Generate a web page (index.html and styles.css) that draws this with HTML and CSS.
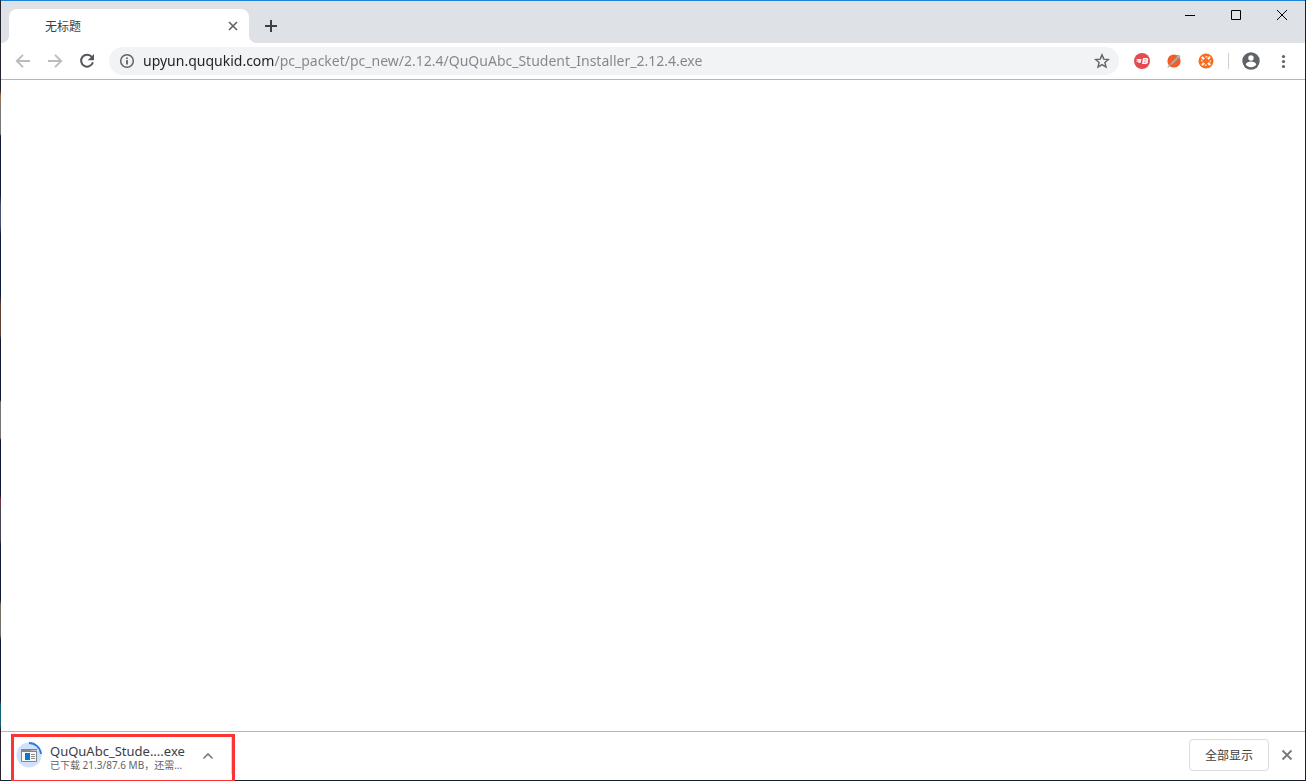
FILE: index.html
```html
<!DOCTYPE html>
<html lang="zh-CN">
<head>
<meta charset="utf-8">
<title>无标题</title>
<link rel="stylesheet" href="styles.css">
</head>
<body>
<div class="window">
  <header class="tabstrip">
    <div class="tab">
      <span class="tab-title">无标题</span>
      <button class="icon-button tab-close" aria-label="关闭标签页">
        <svg width="16" height="16" viewBox="0 0 16 16"><path d="M4 4l8 8M12 4l-8 8" fill="none" stroke="#5f6368" stroke-width="1.600"/></svg>
      </button>
    </div>
    <button class="icon-button new-tab" aria-label="新标签页">
      <svg width="16" height="16" viewBox="0 0 16 16"><path d="M8 2v12M2 8h12" fill="none" stroke="#3c4043" stroke-width="2"/></svg>
    </button>
    <div class="caption">
      <button class="icon-button caption-button" aria-label="最小化">
        <svg width="12" height="12" viewBox="0 0 12 12"><path d="M1 6.500h10" stroke="#000"/></svg>
      </button>
      <button class="icon-button caption-button" aria-label="最大化">
        <svg width="12" height="12" viewBox="0 0 12 12"><path d="M1.500 1.500h9v9h-9z" fill="none" stroke="#000"/></svg>
      </button>
      <button class="icon-button caption-button" aria-label="关闭">
        <svg width="12" height="12" viewBox="0 0 12 12"><path d="M1 1l10 10M11 1L1 11" stroke="#000"/></svg>
      </button>
    </div>
  </header>

  <nav class="toolbar">
    <button class="icon-button nav-button" aria-label="后退">
      <svg width="16" height="16" viewBox="0 0 16 16"><path d="M15 8H2M8 1.800L1.800 8 8 14.200" fill="none" stroke="#babcbe" stroke-width="1.900"/></svg>
    </button>
    <button class="icon-button nav-button" aria-label="前进">
      <svg width="16" height="16" viewBox="0 0 16 16"><path d="M1 8h13M8 1.800L14.200 8 8 14.200" fill="none" stroke="#babcbe" stroke-width="1.900"/></svg>
    </button>
    <button class="icon-button nav-button" aria-label="重新加载">
      <svg width="16" height="16" viewBox="0 0 16 16"><path d="M12.900 4A6 6 0 1 0 13.900 9.300" fill="none" stroke="#54575c" stroke-width="2"/><path d="M15 1v6.300H8.700z" fill="#54575c"/></svg>
    </button>
    <div class="omnibox">
      <button class="icon-button" aria-label="网站信息">
        <svg width="16" height="16" viewBox="0 0 16 16"><circle cx="8" cy="8" r="6.300" fill="none" stroke="#5f6368" stroke-width="1.500"/><path d="M8 7v4.500M8 4.400v1.700" stroke="#5f6368" stroke-width="1.800"/></svg>
      </button>
      <input class="url" type="text" aria-label="地址" spellcheck="false" value="upyun.ququkid.com/pc_packet/pc_new/2.12.4/QuQuAbc_Student_Installer_2.12.4.exe">
      <button class="icon-button" aria-label="添加书签">
        <svg width="16" height="16" viewBox="0 0 16 16"><path d="M8 1.900l1.800 4.200 4.600.4-3.500 3 1.100 4.500L8 11.600 4 14l1.100-4.500-3.500-3 4.600-.4z" fill="none" stroke="#5f6368" stroke-width="1.400"/></svg>
      </button>
    </div>
    <div class="extensions">
      <button class="icon-button" aria-label="扩展程序 B">
        <svg width="16" height="16" viewBox="0 0 16 16"><circle cx="8" cy="8" r="8" fill="#e54b50"/><path d="M3 6h4.600L7 8.200 6.400 10H4l.8-1.200H1.800L3 7.700h1.500L2.200 7z" fill="#fff" fill-opacity=".9"/><path d="M9.700 5.800h2.700c1.600 0 1.400 2-.1 2.100 1.400.2 1.100 2.300-.5 2.300H8.900zM9.300 8h3" fill="none" stroke="#fff" stroke-width="1.500"/></svg>
      </button>
      <button class="icon-button" aria-label="Postman">
        <svg width="16" height="16" viewBox="0 0 16 16"><circle cx="8" cy="8" r="6.600" fill="#f55d24"/><path d="M1.800 14.300L6.300 8.300l5.200-4.900 1.400 1.400-5 5.200z" fill="#c3aaa0" stroke="#8b8b90" stroke-width=".6"/><circle cx="12.300" cy="3.800" r="1.600" fill="#d5b2a2" stroke="#7f8388" stroke-width=".5"/></svg>
      </button>
      <button class="icon-button" aria-label="扩展程序">
        <svg width="16" height="16" viewBox="0 0 16 16"><circle cx="8" cy="8" r="7.500" fill="#f86c20"/><path d="M7.300 3.900h2.200M12.100 7.300v2.200M8.700 12.100H6.500M3.900 8.700V6.500" stroke="#fff" stroke-width="1"/><path d="M3.700 3.900l2.400 2.200M12.100 3.700L9.900 6.100M12.300 12.100L9.900 9.900M3.900 12.300l2.200-2.400" stroke="#fff" stroke-width="2"/></svg>
      </button>
    </div>
    <span class="divider"></span>
    <button class="icon-button profile" aria-label="用户">
      <svg width="18" height="18" viewBox="0 0 18 18"><circle cx="9" cy="9" r="8.700" fill="#5f6368"/><circle cx="9" cy="6" r="2.700" fill="#fff"/><path d="M3.700 12.500c.8-4 9.800-4 10.600 0-2.300 3.700-8.300 3.700-10.600 0z" fill="#fff"/></svg>
    </button>
    <button class="icon-button" aria-label="菜单">
      <svg width="16" height="16" viewBox="0 0 16 16"><g fill="#5f6368"><circle cx="8.500" cy="3.500" r="1.600"/><circle cx="8.500" cy="8.500" r="1.600"/><circle cx="8.500" cy="13.500" r="1.600"/></g></svg>
    </button>
  </nav>

  <main class="page"></main>

  <footer class="shelf">
    <div class="download">
      <svg class="download-icon" width="28" height="28" viewBox="0 0 28 28">
        <circle cx="14" cy="14" r="12.500" fill="#d0e1fb"/>
        <path d="M14 2a12 12 0 0 1 12 11" fill="none" stroke="#2b7be5" stroke-width="1.800"/>
        <path d="M6.500 8.500h15v12h-15z" fill="#f8f8f8" stroke="#858585"/>
        <path d="M6 8h16v3H6z" fill="#858585"/>
        <path d="M16.500 9.500h1M18.500 9.500h1M20.500 9.500h1" stroke="#eee"/>
        <path d="M10 12h5v7h-5z" fill="#0878d7"/>
        <path d="M16 13.500h4M16 15.500h4M16 17.500h4" stroke="#8c8c8c"/>
      </svg>
      <div class="download-text">
        <span class="download-name">QuQuAbc_Stude....exe</span>
        <span class="download-status">已下载 21.3/87.6 MB，还需...</span>
      </div>
      <button class="icon-button download-menu" aria-label="下载选项">
        <svg width="16" height="16" viewBox="0 0 16 16"><path d="M3.500 11.500L8 7l4.500 4.500" fill="none" stroke="#777a7e" stroke-width="1.600"/></svg>
      </button>
      <span class="highlight"></span>
    </div>
    <div class="shelf-actions">
      <button class="show-all">全部显示</button>
      <button class="icon-button" aria-label="关闭下载栏">
        <svg width="16" height="16" viewBox="0 0 16 16"><path d="M3.500 3.500l9 9M12.500 3.500l-9 9" stroke="#75787c" stroke-width="1.800"/></svg>
      </button>
    </div>
  </footer>
</div>
</body>
</html>
```
FILE: styles.css
```css
* { box-sizing: border-box; }

body {
  margin: 0;
  padding: 0 1px 1px;
  min-height: 100vh;
  display: flex;
  background:
    linear-gradient(#24242e 0 90px, #a96d3e 96px, #777 106px 134px, #101b38 136px 195px, #49516b 205px 225px, #0d1b3c 235px 295px, #5a4032 305px 335px, #101a35 340px 400px, #77736f 402px 438px, #0d1735 440px 495px, #8c2940 500px, #444351 510px 540px, #111a36 545px 600px, #766f68 605px 635px, #101a35 640px 700px, #126377 705px 725px, #29222f 730px) left top / 1px 100% no-repeat,
    #1a2033;
  font-family: "Noto Sans", "Noto Sans CJK SC", sans-serif;
  color: #3c4043;
}

.window {
  flex: 1;
  min-width: 0;
  display: flex;
  flex-direction: column;
  border-top: 1px solid #1f82d2;
  background: #fff;
}

button, input {
  font: inherit;
  color: inherit;
}

svg { display: block; }

.icon-button {
  flex: none;
  display: flex;
  align-items: center;
  justify-content: center;
  padding: 0;
  border: 0;
  background: none;
}

.tabstrip {
  display: flex;
  align-items: flex-end;
  height: 42px;
  background: #dee1e6;
}

.tab {
  position: relative;
  display: flex;
  align-items: center;
  justify-content: space-between;
  width: 240px;
  height: 34px;
  margin-left: 8px;
  padding: 0 8px 0 36px;
  border-radius: 8px 8px 0 0;
  background: #fff;
  font-size: 12px;
}

.tab::before,
.tab::after {
  content: "";
  position: absolute;
  bottom: 0;
  width: 8px;
  height: 8px;
}

.tab::before {
  right: 100%;
  background: radial-gradient(circle at 0 0, transparent 8px, #fff 8px);
}

.tab::after {
  left: 100%;
  background: radial-gradient(circle at 100% 0, transparent 8px, #fff 8px);
}

.new-tab {
  width: 28px;
  height: 34px;
  margin-left: 8px;
}

.caption {
  display: flex;
  align-self: flex-start;
  margin-left: auto;
}

.caption-button {
  width: 46px;
  height: 28px;
}

.toolbar {
  display: flex;
  align-items: center;
  height: 37px;
  padding: 0 14px 0 6px;
  border-bottom: 1px solid #b3b5b6;
}

.nav-button {
  width: 32px;
  height: 32px;
}

.omnibox {
  flex: 1;
  min-width: 0;
  display: flex;
  align-items: center;
  gap: 8px;
  height: 28px;
  margin-left: 6px;
  padding: 0 9px 0 10px;
  border-radius: 14px;
  background: #f1f3f4;
}

.url {
  flex: 1;
  min-width: 0;
  padding: 0;
  border: 0;
  outline: 0;
  font-size: 14px;
  line-height: 20px;
  background: linear-gradient(90deg, #202124 131px, #80868b 131px);
  background-clip: text;
  -webkit-text-fill-color: transparent;
}

.extensions {
  display: flex;
  gap: 16px;
  margin-left: 15px;
}

.divider {
  width: 1px;
  height: 16px;
  margin: 0 13px 0 14px;
  background: #cfd1d4;
}

.profile { margin-right: 15px; }

.page { flex: 1; }

.shelf {
  display: flex;
  align-items: center;
  justify-content: space-between;
  height: 49px;
  padding: 0 10px 2px 14px;
  border-top: 1px solid #b3b5b6;
}

.download {
  position: relative;
  display: flex;
  align-items: center;
  width: 217px;
  height: 38px;
  border-right: 1px solid #d5d6d8;
}

.download-text {
  display: flex;
  flex-direction: column;
  width: 143px;
  margin-left: 7px;
  padding-top: 6px;
  white-space: nowrap;
}

.download-name {
  font-size: 13px;
  line-height: 14px;
}

.download-status {
  font-size: 10px;
  line-height: 14px;
  color: #5f6368;
}

.download-menu {
  width: 30px;
  height: 30px;
}

.highlight {
  position: absolute;
  inset: -2px -4px -9px -4px;
  border: 3px solid #fb3435;
  pointer-events: none;
}

.shelf-actions {
  display: flex;
  align-items: center;
  gap: 10px;
}

.show-all {
  width: 80px;
  height: 32px;
  padding: 0;
  border: 1px solid #dadce0;
  border-radius: 4px;
  background: #fff;
  font-size: 12px;
}
```
